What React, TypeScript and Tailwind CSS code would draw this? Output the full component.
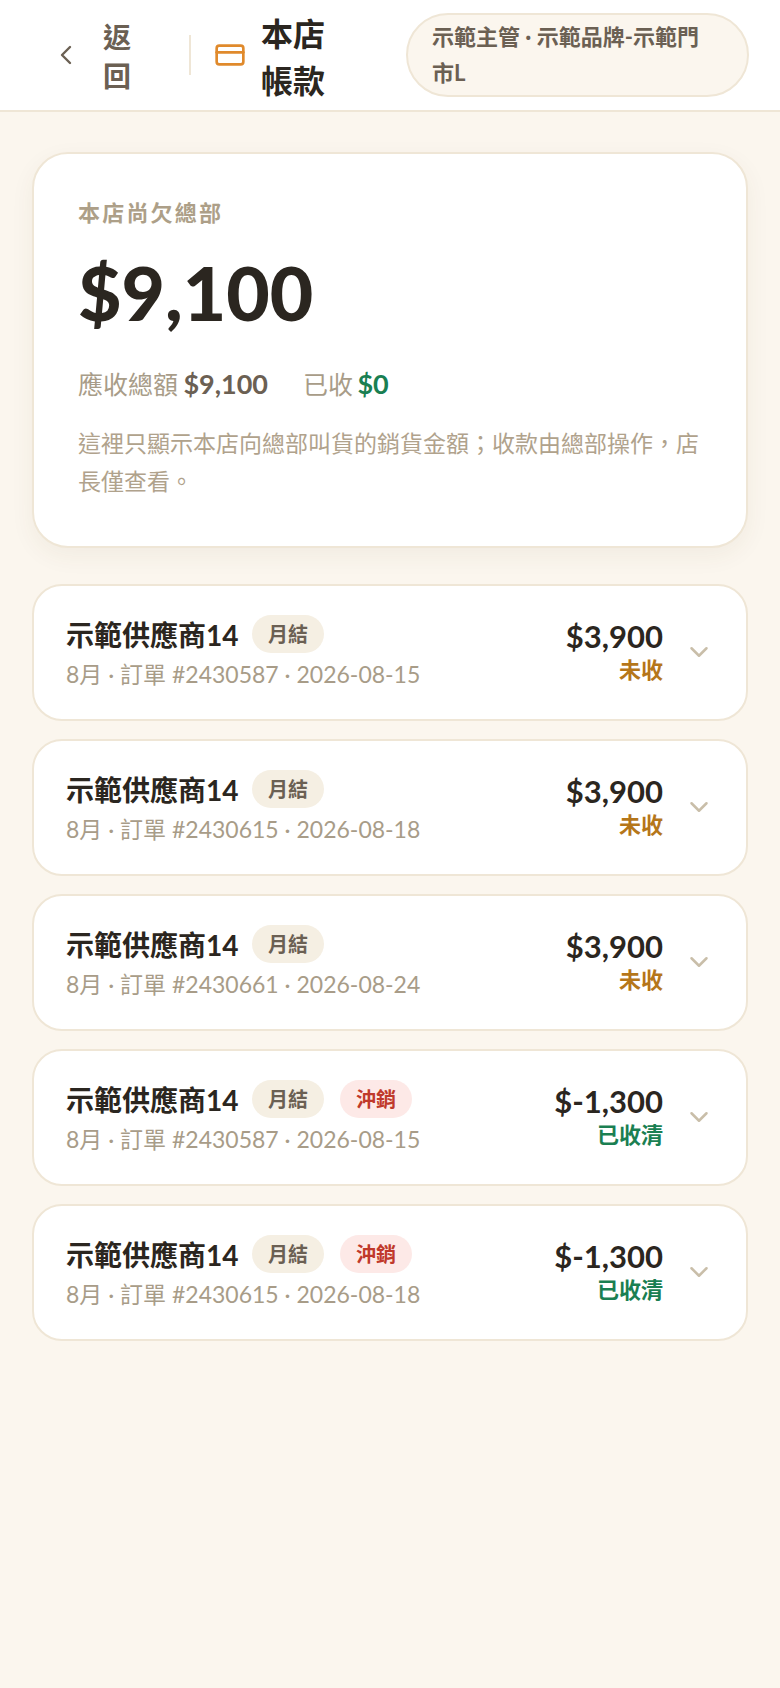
import { ChevronDown, ChevronLeft, CreditCard } from 'lucide-react';

const font = 'font-["Lato","Noto_Sans_CJK_TC",sans-serif]';

const rows = [
  { order: '2430587', date: '2026-08-15', amount: '$3,900', paid: false },
  { order: '2430615', date: '2026-08-18', amount: '$3,900', paid: false },
  { order: '2430661', date: '2026-08-24', amount: '$3,900', paid: false },
  { order: '2430587', date: '2026-08-15', amount: '$-1,300', paid: true },
  { order: '2430615', date: '2026-08-18', amount: '$-1,300', paid: true },
];

function Row({ order, date, amount, paid }: (typeof rows)[number]) {
  return (
    <div className="flex items-center rounded-[30px] border-2 border-[#efe6d6] bg-white pl-[32px] pr-[32px] pt-[27px] pb-[28px]">
      <div className="min-w-0 flex-1">
        <div className="flex items-center">
          <span className="w-[172px] whitespace-nowrap pt-[3px] text-[28px] leading-[38px] font-bold text-[#2b2620]">示範供應商14</span>
          <span className="ml-[14px] rounded-full bg-[#f5efe3] px-[16px] py-[5px] text-[20px] leading-[28px] font-bold text-[#6b6053]">月結</span>
          {paid && <span className="ml-[16px] rounded-full bg-[#fde9e7] px-[16px] py-[5px] text-[20px] leading-[28px] font-bold text-[#c0392b]">沖銷</span>}
        </div>
        <div className="mt-[3px] text-[23px] leading-[34px] text-[#a89c88]">
          8月 · 訂單 #{order} · {date}
        </div>
      </div>
      <div className="pb-[3px] text-right">
        <div className="text-[31px] leading-[38px] font-bold text-[#2b2620]">{amount}</div>
        <div className={`text-[22px] leading-[30px] font-bold ${paid ? 'text-[#1a7f52]' : 'text-[#b5761a]'}`}>{paid ? '已收清' : '未收'}</div>
      </div>
      <ChevronDown className="ml-[21px] h-[30px] w-[30px] text-[#c9bea9]" strokeWidth={2} />
    </div>
  );
}

export default function App() {
  return (
    <div className={`min-h-[1688px] bg-[#fbf6ee] ${font}`}>
      {/* Header */}
      <header className="flex h-[112px] items-center border-b-2 border-[#efe6d6] bg-white pl-[50px]">
        <ChevronLeft className="h-[32px] w-[32px] text-[#6b6053]" strokeWidth={1.8} />
        <div className="ml-[21px] w-[40px] pt-[3px] text-[28px] leading-[39px] font-bold text-[#6b6053]">返回</div>
        <div className="ml-[46px] h-[40px] w-[2px] bg-[#efe6d6]" />
        <CreditCard className="ml-[23px] h-[32px] w-[32px] text-[#e08a2c]" strokeWidth={2} />
        <div className="ml-[15px] w-[66px] pt-[3px] text-[32px] leading-[47px] font-bold text-[#2b2620]">本店帳款</div>
        <div className="ml-[79px] w-[343px] rounded-[44px] border-2 border-[#efe6d6] bg-[#fbf6ee] pl-[24px] pr-[36px] py-[4px] text-[22px] leading-[36px] font-bold text-[#6b6053]">
          示範主管 · 示範品牌-示範門市L
        </div>
      </header>

      <main className="flex flex-col px-[32px] pt-[40px]">
        {/* Summary */}
        <section className="rounded-[36px] border-2 border-[#efe6d6] bg-white px-[44px] pt-[44px] pb-[46px] shadow-[0_8px_24px_rgba(80,60,30,0.06)]">
          <div className="text-[22px] leading-[30px] font-bold tracking-[2.2px] text-[#ad9f88]">本店尚欠總部</div>
          <div className="mt-[16px] text-[75px] leading-[96px] font-black text-[#2b2620]">$9,100</div>
          <div className="mt-[26px] flex gap-[35px] text-[25px] leading-[36px] text-[#a89c88]">
            <span>應收總額 <b className="ml-[-1px] text-[27px] text-[#6b6053]">$9,100</b></span>
            <span>已收 <b className="ml-[-2px] text-[27px] text-[#1a7f52]">$0</b></span>
          </div>
          <p className="mt-[22px] text-[23px] leading-[38px] text-[#b0a28c]">這裡只顯示本店向總部叫貨的銷貨金額；收款由總部操作，店長僅查看。</p>
        </section>

        <div className="mt-[36px] flex flex-col gap-[18px]">
          {rows.map((r, i) => (
            <Row key={i} {...r} />
          ))}
        </div>
      </main>
    </div>
  );
}
